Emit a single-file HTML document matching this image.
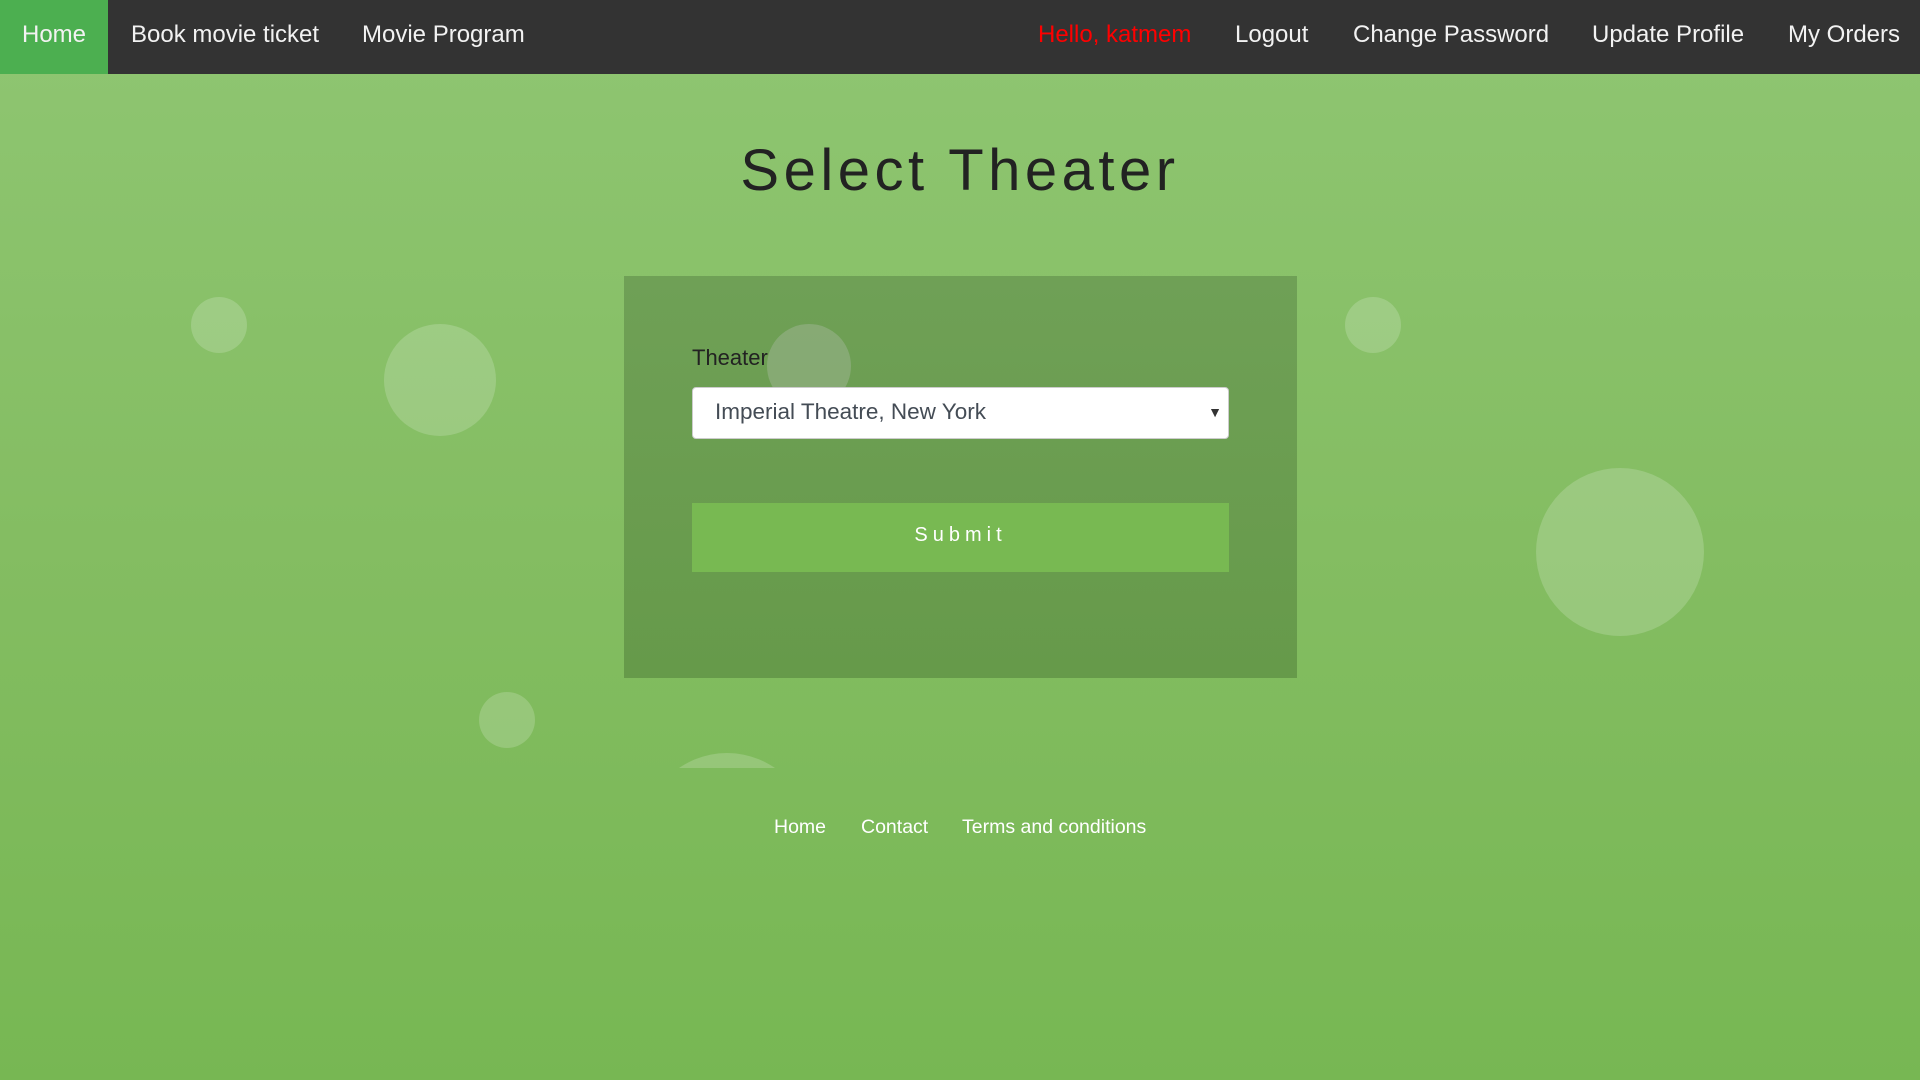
<!DOCTYPE html>
<html><head><meta charset="utf-8"><style>
*{margin:0;padding:0;box-sizing:border-box}
html,body{width:1920px;height:1080px;overflow:hidden}
body{font-family:"Liberation Sans",Arial,sans-serif;background:linear-gradient(#8fc672 0%,#84bd62 50%,#77b753 100%);position:relative}
.nav{position:absolute;left:0;top:0;width:1920px;height:74px;background:#333}
.nav span{position:absolute;top:0;height:74px;line-height:70px;font-size:24px;color:#f2f2f2;white-space:nowrap}
.home{background:#4caf50;width:108px;text-align:center;left:0}
.c{position:absolute;border-radius:50%;background:rgba(255,255,255,0.18)}
h1{position:absolute;left:0;width:1920px;top:137px;text-align:center;font-weight:normal;font-size:58px;letter-spacing:4.5px;color:#222}
.panel{position:absolute;left:624px;top:276px;width:673px;height:402px;background:linear-gradient(#6fa056,#669a4a)}
.lbl{position:absolute;left:692px;top:345px;font-size:22px;color:#222}
.sel{position:absolute;left:692px;top:387px;width:537px;height:52px;background:#fff;border:1px solid #ccc;border-radius:4px;font-size:22.5px;color:#444c55;padding-left:22px;line-height:48px}
.sel i{position:absolute;right:6px;top:0;font-style:normal;font-size:14px;color:#333}
.btn{position:absolute;left:692px;top:503px;width:537px;height:69px;background:#78b952;color:#fff;font-size:20px;letter-spacing:5px;text-align:center;line-height:64px}
.f{position:absolute;top:816px;font-size:19.5px;color:#fff}
.clip{position:absolute;left:0;top:0;width:1920px;height:768px;overflow:hidden}
</style></head><body>
<div class="nav">
<span class="home">Home</span>
<span style="left:131px">Book movie ticket</span>
<span style="left:362px">Movie Program</span>
<span style="left:1038px;color:#f00">Hello, katmem</span>
<span style="left:1235px">Logout</span>
<span style="left:1353px">Change Password</span>
<span style="left:1592px">Update Profile</span>
<span style="left:1788px">My Orders</span>
</div>
<h1>Select Theater</h1>
<div class="clip">
<div class="c" style="left:191px;top:297px;width:56px;height:56px"></div>
<div class="c" style="left:384px;top:324px;width:112px;height:112px"></div>
<div class="c" style="left:1345px;top:297px;width:56px;height:56px"></div>
<div class="c" style="left:1536px;top:468px;width:168px;height:168px"></div>
<div class="c" style="left:479px;top:692px;width:56px;height:56px"></div>
<div class="c" style="left:643px;top:753px;width:168px;height:168px"></div>
</div>
<div class="panel"></div>
<div class="c" style="left:767px;top:324px;width:84px;height:84px;background:rgba(200,200,200,0.28)"></div>
<div class="lbl">Theater</div>
<div class="sel">Imperial Theatre, New York<i>▼</i></div>
<div class="btn">Submit</div>
<div class="f" style="left:774px">Home</div>
<div class="f" style="left:861px">Contact</div>
<div class="f" style="left:962px">Terms and conditions</div>
</body></html>
